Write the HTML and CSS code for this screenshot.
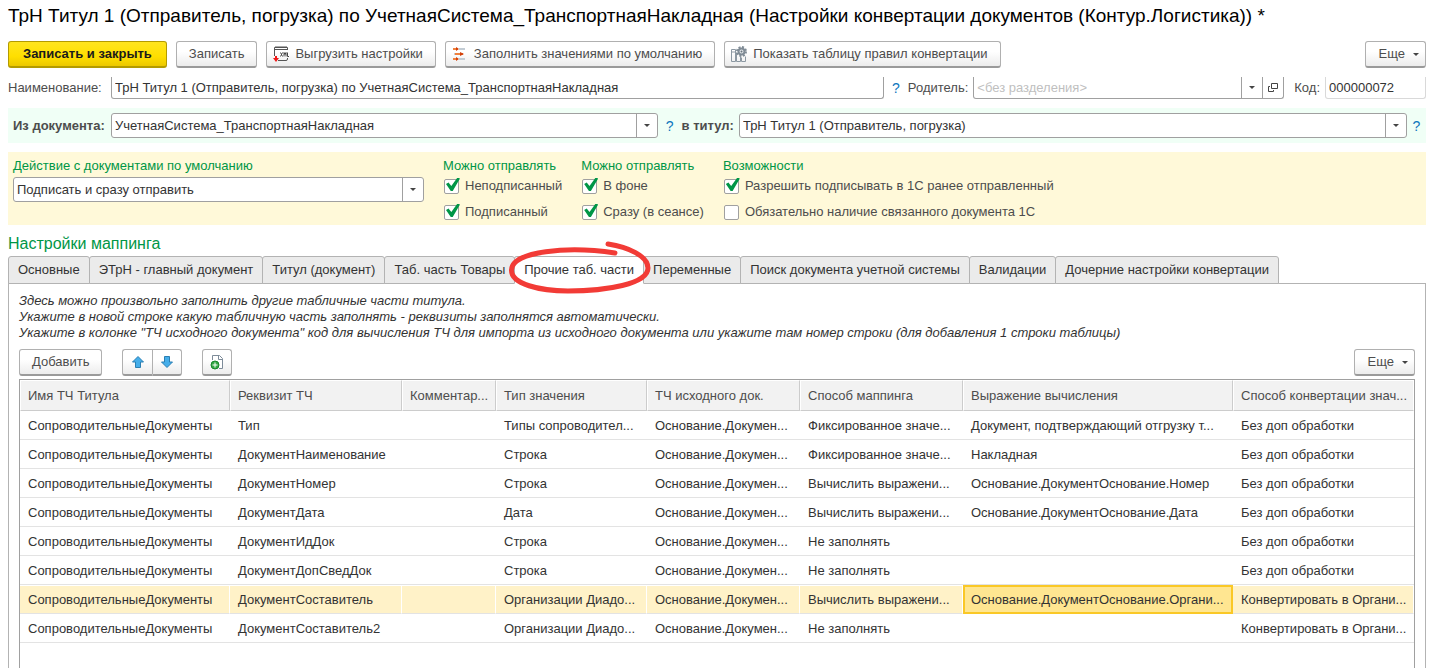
FILE: index.html
```html
<!DOCTYPE html>
<html lang="ru">
<head>
    <meta charset="UTF-8">
    <meta name="viewport" content="width=device-width, initial-scale=1.0">
    <title>Настройки конвертации документов (Контур.Логистика)</title>
    <link rel="stylesheet" href="styles.css">
</head>
<body>
    <h1 class="form-title">ТрН Титул 1 (Отправитель, погрузка) по УчетнаяСистема_ТранспортнаяНакладная (Настройки конвертации документов (Контур.Логистика)) *</h1>

    <div class="toolbar">
        <button class="button primary">Записать и закрыть</button>
        <button class="button">Записать</button>
        <button class="button with-icon">
            <svg class="icon" width="16" height="16" viewBox="0 0 16 16" fill="none">
                <path d="M5 14.5h8q1.5 0 1.5-1.5v-1M14.500 4V1.500H1.500V10M1.500 3.500h13" stroke="#555"/>
                <path d="M2 .5h12v1H2z" fill="#555"/>
                <rect x="7" y="6" width="9" height="5" fill="#fff"/>
                <path d="M7.500 6.500l2 4M9.500 6.500l-2 4M11 10.500v-4l1 2 1-2v4M14.500 6.500v4H16" stroke="#444"/>
                <path d="M3 10v3" stroke="#f01818" stroke-width="2"/>
                <path d="M0 12h6l-3 4z" fill="#f01818"/>
            </svg>
            Выгрузить настройки
        </button>
        <button class="button with-icon">
            <svg class="icon" width="16" height="16" viewBox="0 0 16 16">
                <path d="M7 3h6M2 8h2M7 13h6" stroke="#c3ccd4" stroke-width="2"/>
                <path d="M1 3h5M3 8h8M1 13h5" stroke="#f0803c" stroke-width="2"/>
                <path d="M4 1l3 2-3 2zM8 6l4 2-4 2zM4 11l3 2-3 2z" fill="#d2410c"/>
            </svg>
            Заполнить значениями по умолчанию
        </button>
        <button class="button with-icon">
            <svg class="icon" width="16" height="16" viewBox="0 0 16 16" fill="none">
                <path d="M.5 3.500h4v12h-4zM.5 6h4M5.500 6.500v9h4v-5M10.500 11.500v4h4v-5" stroke="#8c98a2"/>
                <circle cx="10.5" cy="5.5" r="4.5" stroke="#7f8b95" stroke-width="2" stroke-dasharray="2 1.530"/>
                <circle cx="10.5" cy="5.5" r="3" fill="#e4e8eb" stroke="#7f8b95" stroke-width="2"/>
                <circle cx="10.5" cy="5.5" r="1" fill="#66727c"/>
            </svg>
            Показать таблицу правил конвертации
        </button>
        <button class="button more">Еще <span class="arrow"></span></button>
    </div>

    <div class="form-row header-row">
        <label class="row-label" for="name">Наименование:</label>
        <input class="field name-field" id="name" type="text" value="ТрН Титул 1 (Отправитель, погрузка) по УчетнаяСистема_ТранспортнаяНакладная">
        <a class="help" href="#">?</a>
        <label for="parent">Родитель:</label>
        <div class="field combo parent-field">
            <input class="combo-input" id="parent" type="text" placeholder="&lt;без разделения&gt;">
            <button class="combo-button" aria-label="Выбрать"><span class="arrow"></span></button>
            <button class="combo-button" aria-label="Открыть">
                <svg width="10" height="10" viewBox="0 0 10 10" fill="none" stroke="#444">
                    <path d="M3.500.5h6v5h-6zM2 3.500H.5v5h5V7"/>
                </svg>
            </button>
        </div>
        <label class="code-label" for="code">Код:</label>
        <input class="field code-field" id="code" type="text" value="000000072" readonly>
    </div>

    <div class="form-row document-row">
        <label class="row-label" for="source">Из документа:</label>
        <div class="select source-select">
            <select id="source"><option>УчетнаяСистема_ТранспортнаяНакладная</option></select>
            <span class="select-arrow"><span class="arrow"></span></span>
        </div>
        <a class="help" href="#">?</a>
        <label for="target">в титул:</label>
        <div class="select target-select">
            <select id="target"><option>ТрН Титул 1 (Отправитель, погрузка)</option></select>
            <span class="select-arrow"><span class="arrow"></span></span>
        </div>
        <a class="help" href="#">?</a>
    </div>

    <div class="actions">
        <div class="action-group default-action">
            <label class="group-title" for="action">Действие с документами по умолчанию</label>
            <div class="select">
                <select id="action"><option>Подписать и сразу отправить</option></select>
                <span class="select-arrow"><span class="arrow"></span></span>
            </div>
        </div>
        <div class="action-group">
            <span class="group-title">Можно отправлять</span>
            <label class="check"><input type="checkbox" checked>Неподписанный</label>
            <label class="check"><input type="checkbox" checked>Подписанный</label>
        </div>
        <div class="action-group">
            <span class="group-title">Можно отправлять</span>
            <label class="check"><input type="checkbox" checked>В фоне</label>
            <label class="check"><input type="checkbox" checked>Сразу (в сеансе)</label>
        </div>
        <div class="action-group">
            <span class="group-title">Возможности</span>
            <label class="check"><input type="checkbox" checked>Разрешить подписывать в 1С ранее отправленный</label>
            <label class="check"><input type="checkbox">Обязательно наличие связанного документа 1С</label>
        </div>
    </div>

    <h2 class="section-title">Настройки маппинга</h2>

    <div class="tabs" role="tablist">
        <button class="tab" role="tab">Основные</button>
        <button class="tab" role="tab">ЭТрН - главный документ</button>
        <button class="tab" role="tab">Титул (документ)</button>
        <button class="tab" role="tab">Таб. часть Товары</button>
        <button class="tab active" role="tab" aria-selected="true">Прочие таб. части
            <svg class="marker" width="148" height="56" viewBox="0 0 148 56" fill="none" stroke="#f23b36" stroke-width="5" stroke-linecap="round">
                <path d="M109 13C62 6 6 11 5.500 30C5 44 34 51 62 51C100 51 142 44 142 28C142 16 122 7 102 4"/>
            </svg>
        </button>
        <button class="tab" role="tab">Переменные</button>
        <button class="tab" role="tab">Поиск документа учетной системы</button>
        <button class="tab" role="tab">Валидации</button>
        <button class="tab" role="tab">Дочерние настройки конвертации</button>
    </div>

    <div class="panel" role="tabpanel">
        <p class="hint">
            Здесь можно произвольно заполнить другие табличные части титула.<br>
            Укажите в новой строке какую табличную часть заполнять - реквизиты заполнятся автоматически.<br>
            Укажите в колонке "ТЧ исходного документа" код для вычисления ТЧ для импорта из исходного документа или укажите там номер строки (для добавления 1 строки таблицы)
        </p>

        <div class="table-toolbar">
            <button class="button">Добавить</button>
            <div class="button-group">
                <button class="button icon-only" aria-label="Переместить вверх">
                    <svg width="12" height="12" viewBox="0 0 12 12"><path d="M6 .5l5.500 5.500H8.500v5.500h-5V6H.5z" fill="#45aeea" stroke="#2b7fb3"/></svg>
                </button>
                <button class="button icon-only" aria-label="Переместить вниз">
                    <svg width="12" height="12" viewBox="0 0 12 12"><path d="M6 11.500L.5 6h3V.5h5V6h3z" fill="#45aeea" stroke="#2b7fb3"/></svg>
                </button>
            </div>
            <button class="button icon-only" aria-label="Заполнить">
                <svg width="16" height="16" viewBox="0 0 16 16" fill="none">
                    <path d="M3.500 6V1.500h7l3 3v10H10" fill="#fff" stroke="#7d8b99"/>
                    <path d="M9.500 1.500v4h4" stroke="#7d8b99"/>
                    <circle cx="6" cy="11" r="4" fill="#35a845" stroke="#16872a"/>
                    <path d="M6 8.500v5M3.500 11h5" stroke="#fff"/>
                </svg>
            </button>
            <button class="button more">Еще <span class="arrow"></span></button>
        </div>

        <div class="table-box">
            <table class="mapping">
                <colgroup>
                    <col class="col-title">
                    <col class="col-attribute">
                    <col class="col-comment">
                    <col class="col-type">
                    <col class="col-source">
                    <col class="col-method">
                    <col class="col-expression">
                    <col class="col-conversion">
                </colgroup>
                <thead>
                    <tr>
                        <th>Имя ТЧ Титула</th>
                        <th>Реквизит ТЧ</th>
                        <th>Комментар...</th>
                        <th>Тип значения</th>
                        <th>ТЧ исходного док.</th>
                        <th>Способ маппинга</th>
                        <th>Выражение вычисления</th>
                        <th>Способ конвертации знач...</th>
                    </tr>
                </thead>
                <tbody>
                    <tr>
                        <td>СопроводительныеДокументы</td>
                        <td>Тип</td>
                        <td></td>
                        <td>Типы сопроводител...</td>
                        <td>Основание.Докумен...</td>
                        <td>Фиксированное значе...</td>
                        <td>Документ, подтверждающий отгрузку т...</td>
                        <td>Без доп обработки</td>
                    </tr>
                    <tr>
                        <td>СопроводительныеДокументы</td>
                        <td>ДокументНаименование</td>
                        <td></td>
                        <td>Строка</td>
                        <td>Основание.Докумен...</td>
                        <td>Фиксированное значе...</td>
                        <td>Накладная</td>
                        <td>Без доп обработки</td>
                    </tr>
                    <tr>
                        <td>СопроводительныеДокументы</td>
                        <td>ДокументНомер</td>
                        <td></td>
                        <td>Строка</td>
                        <td>Основание.Докумен...</td>
                        <td>Вычислить выражени...</td>
                        <td>Основание.ДокументОснование.Номер</td>
                        <td>Без доп обработки</td>
                    </tr>
                    <tr>
                        <td>СопроводительныеДокументы</td>
                        <td>ДокументДата</td>
                        <td></td>
                        <td>Дата</td>
                        <td>Основание.Докумен...</td>
                        <td>Вычислить выражени...</td>
                        <td>Основание.ДокументОснование.Дата</td>
                        <td>Без доп обработки</td>
                    </tr>
                    <tr>
                        <td>СопроводительныеДокументы</td>
                        <td>ДокументИдДок</td>
                        <td></td>
                        <td>Строка</td>
                        <td>Основание.Докумен...</td>
                        <td>Не заполнять</td>
                        <td></td>
                        <td>Без доп обработки</td>
                    </tr>
                    <tr>
                        <td>СопроводительныеДокументы</td>
                        <td>ДокументДопСведДок</td>
                        <td></td>
                        <td>Строка</td>
                        <td>Основание.Докумен...</td>
                        <td>Не заполнять</td>
                        <td></td>
                        <td>Без доп обработки</td>
                    </tr>
                    <tr class="selected">
                        <td>СопроводительныеДокументы</td>
                        <td>ДокументСоставитель</td>
                        <td></td>
                        <td>Организации Диадо...</td>
                        <td>Основание.Докумен...</td>
                        <td>Вычислить выражени...</td>
                        <td class="current">Основание.ДокументОснование.Органи...</td>
                        <td>Конвертировать в Органи...</td>
                    </tr>
                    <tr>
                        <td>СопроводительныеДокументы</td>
                        <td>ДокументСоставитель2</td>
                        <td></td>
                        <td>Организации Диадо...</td>
                        <td>Основание.Докумен...</td>
                        <td>Не заполнять</td>
                        <td></td>
                        <td>Конвертировать в Органи...</td>
                    </tr>
                </tbody>
            </table>
        </div>
    </div>
</body>
</html>
```

FILE: styles.css
```css
* {
    box-sizing: border-box;
}

body {
    margin: 0;
    padding: 0 6px 0 8px;
    height: 100vh;
    overflow: hidden;
    display: flex;
    flex-direction: column;
    background-color: #fff;
    color: #4d4d4d;
    font-family: "Liberation Sans", Arial, sans-serif;
    font-size: 13px;
    line-height: 16px;
}

button,
input,
select {
    font: inherit;
    color: inherit;
    margin: 0;
}

.form-title {
    margin: 5px 0 14px;
    font-size: 19px;
    line-height: 22px;
    font-weight: normal;
    color: #000;
    white-space: nowrap;
}

/* buttons */
.toolbar,
.table-toolbar {
    display: flex;
    gap: 9px;
}

.button {
    height: 27px;
    padding: 0 12px;
    display: flex;
    align-items: center;
    justify-content: center;
    gap: 8px;
    white-space: nowrap;
    border: 1px solid #b0b0b0;
    border-bottom: 2px solid #9a9a9a;
    border-radius: 3px;
    background: linear-gradient(#fff 40%, #ececec);
}

.primary {
    padding: 0 14px;
    font-weight: bold;
    color: #1a1a1a;
    border-color: #b39b00;
    background: linear-gradient(#ffe51f, #ffdf00 60%, #ecc800);
}

.with-icon {
    padding-left: 6px;
    gap: 6px;
}

.more {
    margin-left: auto;
    padding: 0 6px 0 13px;
}

.icon-only {
    width: 30px;
    padding: 0;
}

.button-group {
    display: flex;
}

.button-group .button:first-child {
    border-radius: 3px 0 0 3px;
    border-right: 0;
}

.button-group .button:last-child {
    border-radius: 0 3px 3px 0;
}

.arrow {
    border: 3px solid transparent;
    border-top-color: #444;
    border-bottom: 0;
}

/* form rows */
.form-row {
    display: flex;
    align-items: center;
    gap: 5px;
}

.header-row {
    margin-top: 9px;
}

.row-label {
    width: 98px;
}

.code-label {
    margin-left: 5px;
}

.field {
    height: 22px;
    padding: 0 3px;
    min-width: 0;
    border: 1px solid #a0a0a0;
    border-top: 0;
    border-radius: 0 0 3px 3px;
    background-color: #fff;
    color: #333;
}

.name-field {
    flex: 5;
}

.parent-field {
    flex: 2;
}

.code-field {
    width: 101px;
    border-color: #d9d9d9;
}

.combo {
    display: flex;
    padding-right: 0;
}

.combo-input {
    flex: 1;
    min-width: 0;
    padding: 0;
    border: 0;
    background: none;
}

.combo-input::placeholder {
    color: #bfbfbf;
}

.combo-button {
    width: 21px;
    padding: 0;
    display: flex;
    align-items: center;
    justify-content: center;
    border: 0;
    border-left: 1px solid #a0a0a0;
    background: none;
}

.help {
    width: 14px;
    text-align: center;
    font-size: 14px;
    color: #0e76bd;
    text-decoration: none;
}

.document-row {
    margin-top: 9px;
    padding: 5px;
    background-color: #f0fff6;
}

.document-row label {
    font-weight: bold;
}

.document-row .row-label {
    width: 93px;
}

.source-select {
    flex: 9;
}

.target-select {
    flex: 11;
}

.document-row .help:last-child {
    width: 9px;
}

.select {
    position: relative;
    min-width: 0;
}

.select select {
    display: block;
    width: 100%;
    height: 25px;
    padding: 0 24px 0 3px;
    appearance: none;
    border: 1px solid #a0a0a0;
    border-radius: 3px;
    background-color: #fff;
    color: #333;
}

.select-arrow {
    position: absolute;
    top: 1px;
    right: 1px;
    bottom: 1px;
    width: 21px;
    display: flex;
    align-items: center;
    justify-content: center;
    border-left: 1px solid #a0a0a0;
    pointer-events: none;
}

/* default actions */
.actions {
    margin-top: 9px;
    padding: 5px;
    display: flex;
    gap: 19px;
    background-color: #fff9d9;
}

.default-action {
    width: 411px;
}

.group-title {
    display: block;
    line-height: 18px;
    color: #009646;
    white-space: nowrap;
}

.default-action .group-title {
    margin-bottom: 2px;
}

.check {
    margin-top: 10px;
    display: flex;
    align-items: center;
    gap: 6px;
    white-space: nowrap;
}

.group-title + .check {
    margin-top: 3px;
}

.check input {
    position: relative;
    width: 15px;
    height: 15px;
    margin-left: 1px;
    appearance: none;
    border: 1px solid #a0a0a0;
    border-radius: 2px;
    background-color: #fff;
}

.check input:checked::before {
    content: "";
    position: absolute;
    left: 1px;
    top: -2px;
    width: 14px;
    height: 14px;
    background-color: #009646;
    clip-path: polygon(0 46%, 18% 36%, 38% 60%, 82% 0, 100% 8%, 48% 96%, 34% 96%);
}

/* tabs */
.section-title {
    margin: 9px 0 3px;
    font-size: 16px;
    line-height: 19px;
    font-weight: normal;
    color: #009646;
}

.tabs {
    display: flex;
    position: relative;
    z-index: 1;
}

.tab {
    height: 28px;
    padding: 0 9px;
    margin-right: -1px;
    border: 1px solid #b3b3b3;
    border-radius: 3px 3px 0 0;
    background-color: #ebebeb;
    color: #333;
    white-space: nowrap;
}

.tab.active {
    position: relative;
    z-index: 1;
    border-bottom-color: #fff;
    background-color: #fff;
}

.marker {
    position: absolute;
    left: -9px;
    top: -17px;
}

.panel {
    flex: 1;
    min-height: 0;
    margin-top: -1px;
    padding: 9px 10px 0;
    display: flex;
    flex-direction: column;
    border: 1px solid #b3b3b3;
    border-bottom: 0;
}

.hint {
    margin: 0 0 8px;
    color: #333;
    font-style: italic;
    white-space: nowrap;
}

.table-toolbar {
    gap: 20px;
    margin-bottom: 3px;
}

/* table */
.table-box {
    flex: 1;
    min-height: 0;
    border: 1px solid #a0a0a0;
    border-bottom: 0;
}

.mapping {
    width: 100%;
    table-layout: fixed;
    border-collapse: separate;
    border-spacing: 0;
    color: #333;
}

.col-title { width: 210px; }
.col-attribute { width: 172px; }
.col-comment { width: 94px; }
.col-type { width: 151px; }
.col-source { width: 153px; }
.col-method { width: 163px; }
.col-conversion { width: 181px; }

.mapping th,
.mapping td {
    height: 29px;
    padding: 0 3px 0 7px;
    text-align: left;
    font-weight: normal;
    white-space: nowrap;
    overflow: hidden;
    text-overflow: ellipsis;
    border: 1px solid #fff;
    border-width: 1px 1px 1px 1px;
    border-bottom-color: #e3e3e3;
}

.mapping th {
    height: 31px;
    color: #4d4d4d;
    background-color: #f2f2f2;
    background-clip: padding-box;
    border-right-color: #ccc;
    border-bottom-color: #ccc;
}

.mapping th:last-child {
    border-right-color: #fff;
}

.mapping td {
    border-left: 0;
    border-right: 0;
    padding-left: 8px;
}

.mapping .selected td {
    border-right: 1px solid #fff;
    background-color: #fff2c8;
    background-clip: padding-box;
}

.mapping .selected .current {
    padding: 0 2px 0 6px;
    border: 2px solid #fac826;
    background-color: #ffe691;
}
```
